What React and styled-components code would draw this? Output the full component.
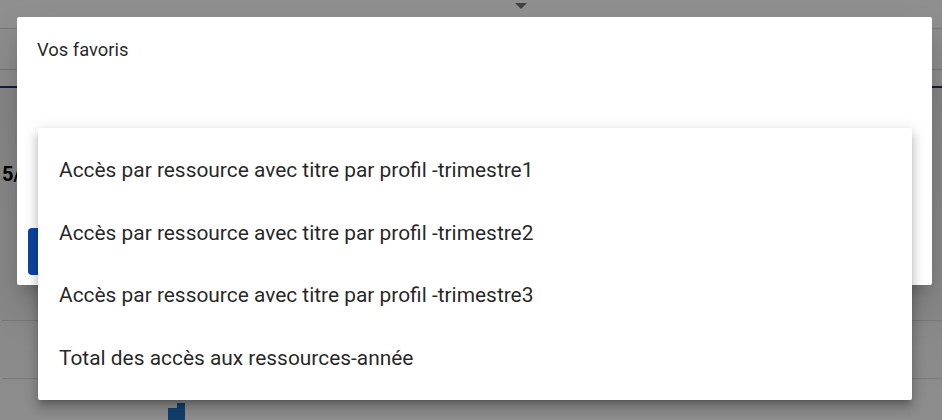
import React from "react";
import styled, { createGlobalStyle } from "styled-components";

const GlobalStyle = createGlobalStyle`
  html, body {
    margin: 0;
    padding: 0;
    width: 942px;
    height: 420px;
    overflow: hidden;
    font-family: Roboto, "Liberation Sans", sans-serif;
  }
`;

const Page = styled.div`
  position: relative;
  width: 942px;
  height: 420px;
  background: linear-gradient(#ececec, #f4f4f4 70%, #fafafa);
  overflow: hidden;
`;

const TopBar = styled.div`
  height: 28px;
  background: #fff;
  border-bottom: 1px solid #d0d0d0;
  display: flex;
  justify-content: center;
`;

const Caret = styled.div`
  margin: 3px 0 0 100px;
  width: 0;
  height: 0;
  border-left: 6px solid transparent;
  border-right: 6px solid transparent;
  border-top: 6px solid #777;
`;

const SubBar = styled.div`
  height: ${({ h }) => h}px;
  background: ${({ bg }) => bg};
  border-bottom: ${({ line }) => line};
`;

const Content = styled.div`
  padding: 74px 0 0 2px;
  display: flex;
  flex-direction: column;
`;

const Stat = styled.div`
  font-weight: bold;
  font-size: 20px;
  color: #000;
  height: 158px;
`;

const Rule = styled.div`
  height: ${({ h }) => h}px;
  border-top: 1px solid #d8d8d8;
  display: flex;
  align-items: flex-end;
`;

const Bars = styled.div`
  display: flex;
  align-items: flex-end;
  height: 20px;
  margin-left: 166px;
`;

const Bar = styled.div`
  width: ${({ w }) => w}px;
  height: ${({ h }) => h}px;
  background: #1f6fc0;
`;

const Overlay = styled.div`
  position: absolute;
  inset: 0;
  background: rgba(0, 0, 0, 0.44);
`;

const Dialog = styled.div`
  position: absolute;
  left: 17px;
  top: 17px;
  width: 915px;
  height: 268px;
  background: #fff;
  border-radius: 2px;
  box-shadow: 0 11px 15px -7px rgba(0, 0, 0, 0.2),
    0 24px 38px 3px rgba(0, 0, 0, 0.14);
  display: flex;
  flex-direction: column;
  box-sizing: border-box;
`;

const Title = styled.div`
  padding: 22px 20px 0;
  font-size: 18.4px;
  color: rgba(0, 0, 0, 0.87);
  flex: 1;
`;

const Actions = styled.div`
  display: flex;
  padding: 0 11px 10px;
`;

const Button = styled.button`
  height: 47px;
  width: 120px;
  border: none;
  border-radius: 4px;
  background: #0b47a1;
`;

const Menu = styled.ul`
  position: absolute;
  left: 38px;
  top: 128px;
  width: 874px;
  margin: 0;
  padding: 11px 0;
  list-style: none;
  background: #fff;
  border-radius: 2px;
  box-shadow: 0 5px 5px -3px rgba(0, 0, 0, 0.2),
    0 8px 10px 1px rgba(0, 0, 0, 0.14), 0 3px 14px 2px rgba(0, 0, 0, 0.12);
`;

const Item = styled.li`
  height: 62.5px;
  display: flex;
  align-items: center;
  padding: 0 21px;
  font-size: 20.9px;
  color: rgba(0, 0, 0, 0.87);
`;

const favoris = [
  "Accès par ressource avec titre par profil -trimestre1",
  "Accès par ressource avec titre par profil -trimestre2",
  "Accès par ressource avec titre par profil -trimestre3",
  "Total des accès aux ressources-année",
];

export default function App() {
  return (
    <>
      <GlobalStyle />
      <Page>
        <TopBar>
          <Caret />
        </TopBar>
        <SubBar h={40} bg="#fbfbfb" line="1px solid #d0d0d0" />
        <SubBar h={16} bg="#fbfbfb" line="2px solid #2b3170" />
        <Content>
          <Stat>5/</Stat>
          <Rule h={57} />
          <Rule h={44}>
            <Bars>
              <Bar w={9} h={15} />
              <Bar w={8} h={20} />
            </Bars>
          </Rule>
        </Content>
        <Overlay />
        <Dialog>
          <Title>Vos favoris</Title>
          <Actions>
            <Button aria-label="Ouvrir" />
          </Actions>
        </Dialog>
        <Menu>
          {favoris.map((f) => (
            <Item key={f}>{f}</Item>
          ))}
        </Menu>
      </Page>
    </>
  );
}
